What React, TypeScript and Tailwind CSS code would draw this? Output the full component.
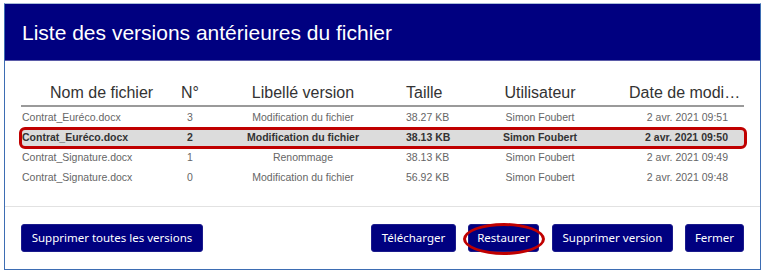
import React from 'react';

interface VersionRow {
  name: string;
  num: number;
  label: string;
  size: string;
  user: string;
  date: string;
  selected?: boolean;
}

const rows: VersionRow[] = [
  { name: 'Contrat_Euréco.docx', num: 3, label: 'Modification du fichier', size: '38.27 KB', user: 'Simon Foubert', date: '2 avr. 2021 09:51' },
  { name: 'Contrat_Euréco.docx', num: 2, label: 'Modification du fichier', size: '38.13 KB', user: 'Simon Foubert', date: '2 avr. 2021 09:50', selected: true },
  { name: 'Contrat_Signature.docx', num: 1, label: 'Renommage', size: '38.13 KB', user: 'Simon Foubert', date: '2 avr. 2021 09:49' },
  { name: 'Contrat_Signature.docx', num: 0, label: 'Modification du fichier', size: '56.92 KB', user: 'Simon Foubert', date: '2 avr. 2021 09:48' },
];

const cols = 'grid grid-cols-[139px_60px_166px_84px_140px_133px]';

const DialogButton: React.FC<{ text: string; className?: string }> = ({ text, className = '' }) => (
  <button
    className={`h-[28px] rounded-[3px] bg-[#000080] border border-[#1a1a8c] text-white text-[11.5px] leading-none font-['Noto_Sans',sans-serif] ${className}`}
  >
    {text}
  </button>
);

export default function App() {
  return (
    <div className="w-[766px] h-[275px] bg-white pt-[3px] pl-[4px] font-['Liberation_Sans',Arial,sans-serif]">
      <div className="w-[757px] h-[267px] border border-[#3d6db3] border-t-[#a9bcd8] flex flex-col">
        <div className="h-[57px] bg-[#000080] border-b border-[#5b5ba8] flex items-center pl-[17px]">
          <h1 className="text-white text-[21px] leading-none">Liste des versions antérieures du fichier</h1>
        </div>

        <div className="px-[16px] pt-[19px]">
          <div className={`${cols} h-[27px] items-center text-[16px] text-[#333] border-b-2 border-[#9a9a9a]`}>
            <div className="pl-[29px]">Nom de fichier</div>
            <div className="text-center">N°</div>
            <div className="text-center">Libellé version</div>
            <div className="pl-[20px]">Taille</div>
            <div className="text-center">Utilisateur</div>
            <div className="pl-[19px] text-right truncate">Date de modification</div>
          </div>

          <div className="mt-[1px]">
            {rows.map((r, i) => (
              <div key={i} className="relative">
                <div
                  className={`${cols} h-[20px] items-center text-[10.5px] ${
                    r.selected ? 'bg-[#dcdcdc] font-bold text-[#333]' : 'text-[#666]'
                  }`}
                >
                  <div className="pl-[1px] whitespace-nowrap">{r.name}</div>
                  <div className="text-center">{r.num}</div>
                  <div className="text-center whitespace-nowrap">{r.label}</div>
                  <div className="pl-[20px] whitespace-nowrap">{r.size}</div>
                  <div className="text-center whitespace-nowrap">{r.user}</div>
                  <div className="text-right pr-[15px] whitespace-nowrap">{r.date}</div>
                </div>
                {r.selected && (
                  <div className="absolute -left-[2px] -right-[3px] -top-[1px] -bottom-[1px] border-[3px] border-[#c00000] rounded-[6px] pointer-events-none" />
                )}
              </div>
            ))}
          </div>
        </div>

        <div className="mt-auto border-t border-[#e2e2e2] h-[63px] px-[16px] pt-[17px] flex items-start">
          <DialogButton text="Supprimer toutes les versions" className="w-[182px]" />
          <div className="ml-auto flex gap-[12px]">
            <DialogButton text="Télécharger" className="w-[85px]" />
            <div className="relative">
              <DialogButton text="Restaurer" className="w-[71px]" />
              <div className="absolute -left-[5px] -right-[6px] -top-[1px] -bottom-[3px] border-[3px] border-[#c00000] rounded-[50%] pointer-events-none" />
            </div>
            <DialogButton text="Supprimer version" className="w-[121px] ml-[1px]" />
            <DialogButton text="Fermer" className="w-[59px]" />
          </div>
        </div>
      </div>
    </div>
  );
}
